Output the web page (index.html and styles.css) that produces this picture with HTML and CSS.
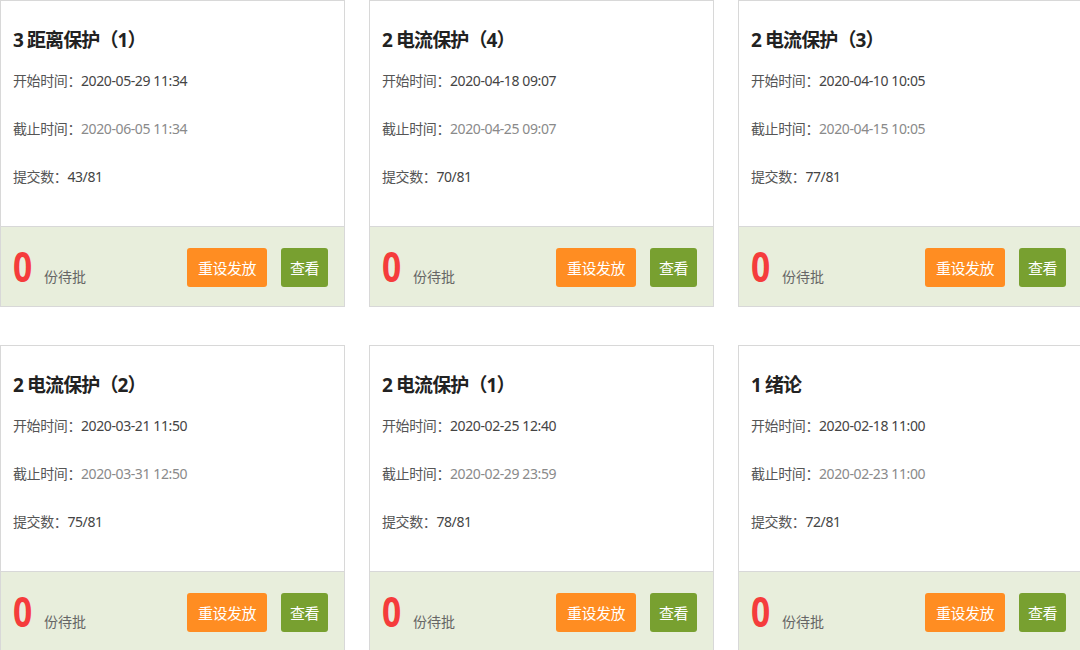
FILE: index.html
```html
<!DOCTYPE html>
<html lang="zh-CN">
<head>
    <meta charset="UTF-8">
    <title>作业列表</title>
    <link rel="stylesheet" href="styles.css">
</head>
<body>
    <div class="task-list">
        <div class="card">
            <div class="card-body">
                <h3 class="title">3 距离保护（1）</h3>
                <p class="row">开始时间：<span class="start">2020-05-29 11:34</span></p>
                <p class="row">截止时间：<span class="end">2020-06-05 11:34</span></p>
                <p class="row">提交数：<span class="start">43/81</span></p>
            </div>
            <div class="card-foot">
                <div class="pending"><span class="num">0</span><span class="unit">份待批</span></div>
                <div class="actions">
                    <button class="btn btn-reset">重设发放</button>
                    <button class="btn btn-view">查看</button>
                </div>
            </div>
        </div>
        <div class="card">
            <div class="card-body">
                <h3 class="title">2 电流保护（4）</h3>
                <p class="row">开始时间：<span class="start">2020-04-18 09:07</span></p>
                <p class="row">截止时间：<span class="end">2020-04-25 09:07</span></p>
                <p class="row">提交数：<span class="start">70/81</span></p>
            </div>
            <div class="card-foot">
                <div class="pending"><span class="num">0</span><span class="unit">份待批</span></div>
                <div class="actions">
                    <button class="btn btn-reset">重设发放</button>
                    <button class="btn btn-view">查看</button>
                </div>
            </div>
        </div>
        <div class="card">
            <div class="card-body">
                <h3 class="title">2 电流保护（3）</h3>
                <p class="row">开始时间：<span class="start">2020-04-10 10:05</span></p>
                <p class="row">截止时间：<span class="end">2020-04-15 10:05</span></p>
                <p class="row">提交数：<span class="start">77/81</span></p>
            </div>
            <div class="card-foot">
                <div class="pending"><span class="num">0</span><span class="unit">份待批</span></div>
                <div class="actions">
                    <button class="btn btn-reset">重设发放</button>
                    <button class="btn btn-view">查看</button>
                </div>
            </div>
        </div>
        <div class="card">
            <div class="card-body">
                <h3 class="title">2 电流保护（2）</h3>
                <p class="row">开始时间：<span class="start">2020-03-21 11:50</span></p>
                <p class="row">截止时间：<span class="end">2020-03-31 12:50</span></p>
                <p class="row">提交数：<span class="start">75/81</span></p>
            </div>
            <div class="card-foot">
                <div class="pending"><span class="num">0</span><span class="unit">份待批</span></div>
                <div class="actions">
                    <button class="btn btn-reset">重设发放</button>
                    <button class="btn btn-view">查看</button>
                </div>
            </div>
        </div>
        <div class="card">
            <div class="card-body">
                <h3 class="title">2 电流保护（1）</h3>
                <p class="row">开始时间：<span class="start">2020-02-25 12:40</span></p>
                <p class="row">截止时间：<span class="end">2020-02-29 23:59</span></p>
                <p class="row">提交数：<span class="start">78/81</span></p>
            </div>
            <div class="card-foot">
                <div class="pending"><span class="num">0</span><span class="unit">份待批</span></div>
                <div class="actions">
                    <button class="btn btn-reset">重设发放</button>
                    <button class="btn btn-view">查看</button>
                </div>
            </div>
        </div>
        <div class="card">
            <div class="card-body">
                <h3 class="title">1 绪论</h3>
                <p class="row">开始时间：<span class="start">2020-02-18 11:00</span></p>
                <p class="row">截止时间：<span class="end">2020-02-23 11:00</span></p>
                <p class="row">提交数：<span class="start">72/81</span></p>
            </div>
            <div class="card-foot">
                <div class="pending"><span class="num">0</span><span class="unit">份待批</span></div>
                <div class="actions">
                    <button class="btn btn-reset">重设发放</button>
                    <button class="btn btn-view">查看</button>
                </div>
            </div>
        </div>
    </div>
</body>
</html>
```

FILE: styles.css
```css
body {
    margin: 0;
    background: #fff;
    font-family: "Noto Sans", "Noto Sans CJK SC", sans-serif;
    overflow: hidden;
}

.task-list {
    display: grid;
    grid-template-columns: repeat(3, 345px);
    column-gap: 24px;
    row-gap: 38px;
}

.card {
    border: 1px solid #d8d8d8;
    background: #fff;
    height: 307px;
    box-sizing: border-box;
    display: flex;
    flex-direction: column;
}

.card-body {
    flex: 1;
    padding: 27px 12px 0;
}

.title {
    margin: 0;
    font-size: 19px;
    line-height: 24px;
    font-weight: bold;
    color: #222;
    letter-spacing: -0.9px;
}

.row {
    margin: 0;
    font-size: 14px;
    line-height: 20px;
    color: #555;
    letter-spacing: -0.4px;
}

.title + .row {
    margin-top: 19px;
}

.row + .row {
    margin-top: 28px;
}

.start {
    color: #444;
}

.end {
    color: #8a8a8a;
}

.card-foot {
    height: 79px;
    border-top: 1px solid #d8d8d8;
    background: #e8eedc;
    display: flex;
    align-items: center;
    justify-content: space-between;
    padding: 0 16px 0 12px;
}

.pending {
    display: flex;
    align-items: baseline;
    margin-top: -2px;
}

.num {
    display: inline-block;
    font-size: 42px;
    font-weight: bold;
    color: #f53c3c;
    line-height: 42px;
    width: 20px;
    transform: scaleX(0.8);
    transform-origin: left center;
}

.unit {
    margin-left: 11px;
    font-size: 14px;
    color: #666;
}

.actions {
    display: flex;
    gap: 14px;
    margin-top: 1px;
}

.btn {
    height: 39px;
    border: none;
    border-radius: 3px;
    color: #fff;
    font-family: "Noto Sans CJK SC", sans-serif;
    font-size: 15px;
    letter-spacing: -0.5px;
    padding: 0;
    cursor: pointer;
}

.btn-reset {
    width: 80px;
    background: #ff8d22;
}

.btn-view {
    width: 47px;
    background: #78a030;
}
```
